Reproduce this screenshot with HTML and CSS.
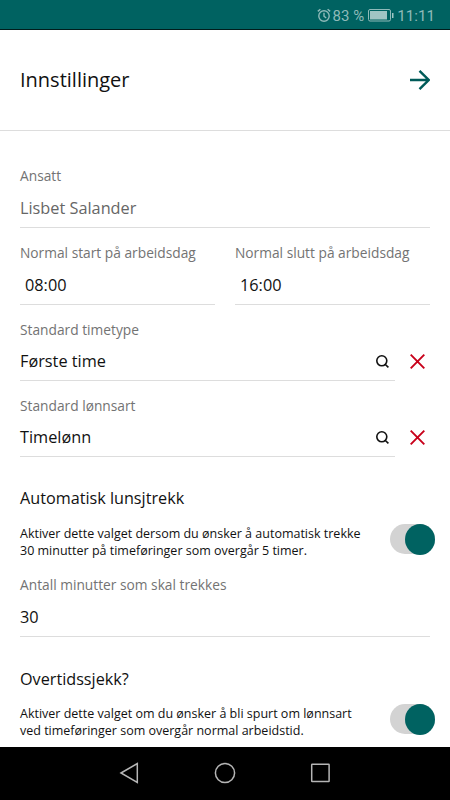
FILE: index.html
```html
<!DOCTYPE html>
<html lang="no">
<head>
  <meta charset="utf-8">
  <title>Innstillinger</title>
  <link rel="stylesheet" href="styles.css">
</head>
<body>
  <div class="statusbar">
    <svg class="alarm" width="14" height="15" viewBox="0 0 14 15">
      <circle cx="7" cy="8" r="5.2"/>
      <path d="M7 4.8V8.2L9.2 10M0.8 3.4L3.4 1.2M13.2 3.4L10.6 1.2"/>
    </svg>
    <span class="percent">83 %</span>
    <svg class="battery" width="26" height="13" viewBox="0 0 26 13">
      <rect class="case" x="0.5" y="0.5" width="22" height="11.5" rx="1.5"/>
      <rect class="level" x="2" y="2" width="17" height="8.5"/>
      <rect class="level" x="24" y="4" width="1.5" height="5"/>
    </svg>
    <span class="clock">11:11</span>
  </div>

  <header class="header">
    <h1>Innstillinger</h1>
    <svg width="20" height="20" viewBox="0 0 20 20">
      <path d="M0 10H18.5M9.5 0.8L18.7 10L9.5 19.2"/>
    </svg>
  </header>

  <main class="content">
    <div class="field disabled">
      <label>Ansatt</label>
      <div class="value">Lisbet Salander</div>
    </div>

    <div class="row">
      <div class="field time">
        <label>Normal start på arbeidsdag</label>
        <div class="value">08:00</div>
      </div>
      <div class="field time">
        <label>Normal slutt på arbeidsdag</label>
        <div class="value">16:00</div>
      </div>
    </div>

    <div class="field lookup">
      <label>Standard timetype</label>
      <div class="lookup-row">
        <div class="value">Første time
          <svg class="search" width="13" height="13" viewBox="0 0 13 13"><circle cx="5.8" cy="5.8" r="5"/><path d="M8.8 9L12.4 12.4"/></svg>
        </div>
        <svg class="clear" width="15" height="15" viewBox="0 0 15 15"><path d="M0.7 0.7L14.3 14.3M14.3 0.7L0.7 14.3"/></svg>
      </div>
    </div>

    <div class="field lookup">
      <label>Standard lønnsart</label>
      <div class="lookup-row">
        <div class="value">Timelønn
          <svg class="search" width="13" height="13" viewBox="0 0 13 13"><circle cx="5.8" cy="5.8" r="5"/><path d="M8.8 9L12.4 12.4"/></svg>
        </div>
        <svg class="clear" width="15" height="15" viewBox="0 0 15 15"><path d="M0.7 0.7L14.3 14.3M14.3 0.7L0.7 14.3"/></svg>
      </div>
    </div>

    <h2>Automatisk lunsjtrekk</h2>
    <div class="setting">
      <p>Aktiver dette valget dersom du ønsker å automatisk trekke<br>30 minutter på timeføringer som overgår 5 timer.</p>
      <div class="switch"><div class="knob"></div></div>
    </div>

    <div class="field">
      <label>Antall minutter som skal trekkes</label>
      <div class="value">30</div>
    </div>

    <h2 class="overtime">Overtidssjekk?</h2>
    <div class="setting">
      <p>Aktiver dette valget om du ønsker å bli spurt om lønnsart<br>ved timeføringer som overgår normal arbeidstid.</p>
      <div class="switch"><div class="knob"></div></div>
    </div>
  </main>

  <nav class="navbar">
    <svg width="22" height="22" viewBox="0 0 22 22"><path d="M2 11L18.3 1.5V20.5Z"/></svg>
    <svg width="22" height="22" viewBox="0 0 22 22"><circle cx="11" cy="11" r="9.6"/></svg>
    <svg width="22" height="22" viewBox="0 0 22 22"><rect x="2.7" y="2.2" width="17.4" height="17.4" rx="0.5"/></svg>
  </nav>
</body>
</html>
```

FILE: styles.css
```css
* {
  box-sizing: border-box;
}

body {
  margin: 0;
  height: 800px;
  display: flex;
  flex-direction: column;
  overflow: hidden;
  background: #fff;
  color: #111;
  font-family: "Open Sans", "Noto Sans", sans-serif;
}

svg {
  display: block;
  flex: none;
  fill: none;
}

h1, h2, p {
  margin: 0;
  font-weight: 400;
}

.statusbar {
  height: 30px;
  flex: none;
  display: flex;
  align-items: center;
  justify-content: flex-end;
  padding: 2px 15px 0 0;
  background: #006261;
  border-bottom: 1px solid #001d1c;
  color: #8fbab9;
  font-family: Roboto, sans-serif;
  font-size: 15.2px;
}

.alarm {
  stroke: #8fbab9;
  stroke-width: 1.4;
  margin-right: 2px;
}

.percent {
  font-size: 15px;
  margin-right: 4px;
}

.battery {
  margin-right: 3px;
}

.case {
  stroke: #8fbab9;
}

.level {
  fill: #a0c5c4;
}

.header {
  height: 101px;
  flex: none;
  display: flex;
  align-items: center;
  justify-content: space-between;
  padding: 0 20px;
  border-bottom: 1px solid #ddd;
}

.header h1 {
  font-size: 20px;
  padding-bottom: 1px;
}

.header svg {
  stroke: #005b59;
  stroke-width: 2.4;
}

.content {
  flex: 1;
  min-height: 0;
  padding: 35px 20px 0;
}

.field {
  margin-bottom: 15px;
}

.field label {
  display: block;
  height: 20px;
  line-height: 20px;
  font-size: 13.75px;
  color: #737373;
}

.value {
  height: 42px;
  line-height: 44px;
  font-size: 16.3px;
  border-bottom: 1px solid #ddd;
}

.disabled .value {
  color: #666;
}

.row {
  display: flex;
  gap: 20px;
}

.row .field {
  flex: 1;
}

.time .value {
  padding-left: 5px;
}

.lookup-row {
  display: flex;
  align-items: center;
  padding-right: 5px;
}

.lookup .value {
  flex: 1;
  display: flex;
  align-items: center;
  justify-content: space-between;
  height: 41px;
  margin-right: 15px;
  padding: 2px 6px 0 0;
}

.search {
  stroke: #111;
  stroke-width: 1.6;
}

.clear {
  margin-top: 2px;
  stroke: #c8001a;
  stroke-width: 1.9;
}

h2 {
  height: 20px;
  line-height: 21px;
  margin: 31px 0 17px;
  font-size: 16.2px;
}

.overtime {
  line-height: 22px;
}

.setting {
  display: flex;
  justify-content: space-between;
  height: 50px;
  margin-right: -5px;
}

.setting p {
  font-size: 12.5px;
  line-height: 17px;
  white-space: nowrap;
}

.switch {
  width: 45px;
  height: 30px;
  flex: none;
  margin-top: -1px;
  display: flex;
  justify-content: flex-end;
  border-radius: 15px;
  background: #d3d3d3;
}

.knob {
  width: 30px;
  height: 31px;
  border-radius: 50%;
  background: #006261;
}

.navbar {
  height: 53px;
  flex: none;
  display: flex;
  justify-content: center;
  gap: 73px;
  padding-top: 15px;
  background: #000;
}

.navbar svg {
  stroke: #b5b5b5;
  stroke-width: 1.5;
}
```
